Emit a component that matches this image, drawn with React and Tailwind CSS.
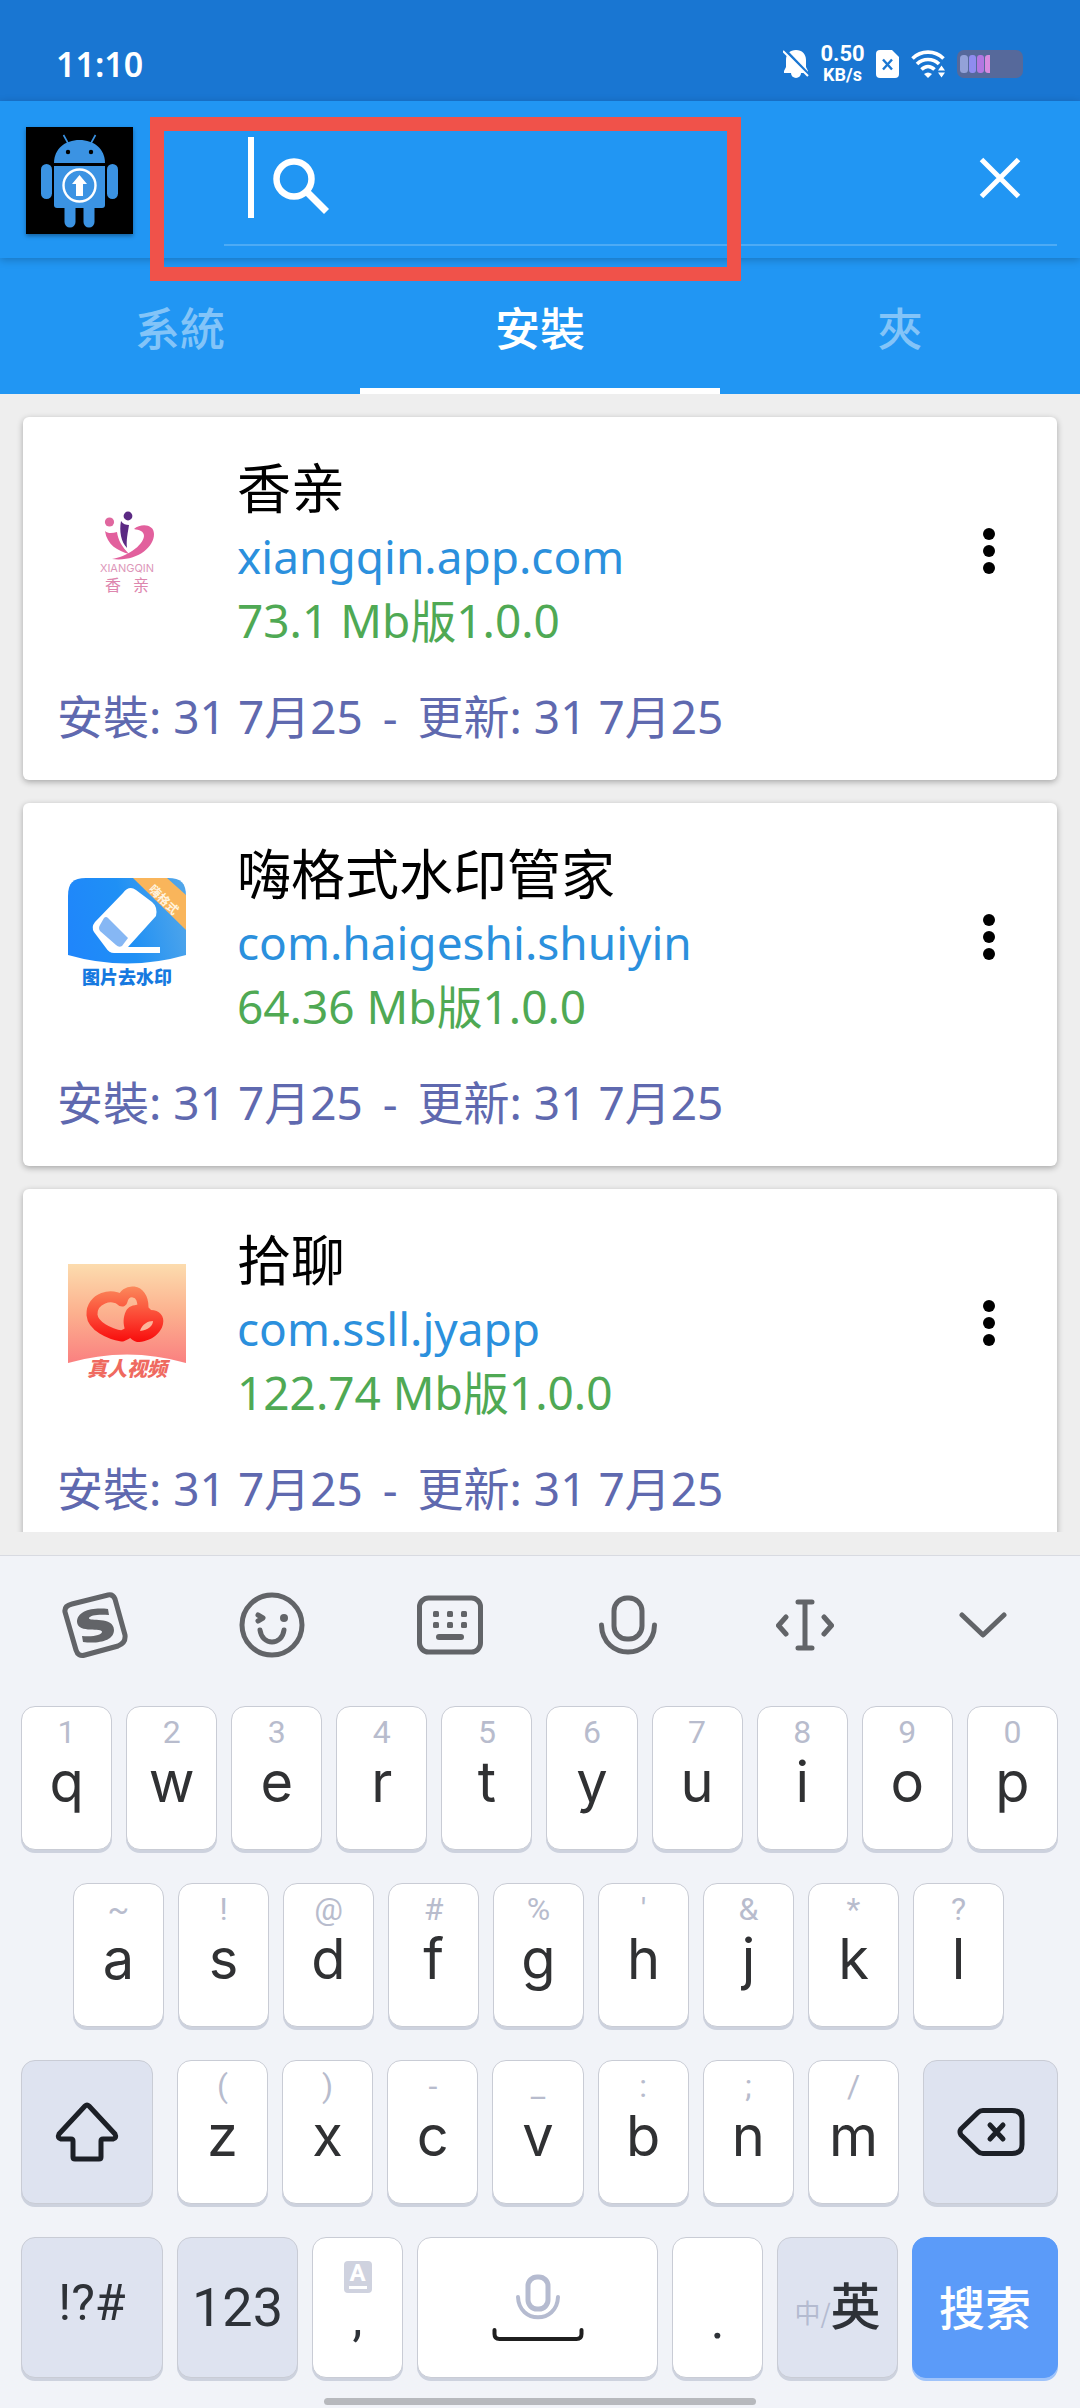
import React, { useState } from 'react';

const apps = [
  {
    name: '香亲',
    pkg: 'xiangqin.app.com',
    info: '73.1 Mb版1.0.0',
    installed: '31 7月25',
    updated: '31 7月25',
    Icon: XiangqinIcon,
  },
  {
    name: '嗨格式水印管家',
    pkg: 'com.haigeshi.shuiyin',
    info: '64.36 Mb版1.0.0',
    installed: '31 7月25',
    updated: '31 7月25',
    Icon: WatermarkIcon,
  },
  {
    name: '拾聊',
    pkg: 'com.ssll.jyapp',
    info: '122.74 Mb版1.0.0',
    installed: '31 7月25',
    updated: '31 7月25',
    Icon: ShiliaoIcon,
  },
];

const tabs = ['系統', '安裝', '夾'];

const row1 = [['q', '1'], ['w', '2'], ['e', '3'], ['r', '4'], ['t', '5'], ['y', '6'], ['u', '7'], ['i', '8'], ['o', '9'], ['p', '0']];
const row2 = [['a', '~'], ['s', '!'], ['d', '@'], ['f', '#'], ['g', '%'], ['h', "'"], ['j', '&'], ['k', '*'], ['l', '?']];
const row3 = [['z', '('], ['x', ')'], ['c', '-'], ['v', '_'], ['b', ':'], ['n', ';'], ['m', '/']];

/* App icons */

function AndroidLogo() {
  return (
    <svg viewBox="0 0 107 107" className="w-[107px] h-[107px] shrink-0 bg-black shadow-[0_2px_4px_rgba(0,0,0,0.35)]" aria-hidden="true">
      <g fill="#3b93e3">
        <path d="M28 36C28 22 39 13 53.500 13S79 22 79 36z" />
        <path d="M28 39h51v39a3 3 0 0 1-3 3H31a3 3 0 0 1-3-3z" />
        <rect x="15" y="37" width="11" height="35" rx="5.500" />
        <rect x="81" y="37" width="11" height="35" rx="5.500" />
        <path d="M38.500 80h11v15a5.500 5.500 0 0 1-11 0z" />
        <path d="M57.500 80h11v15a5.500 5.500 0 0 1-11 0z" />
      </g>
      <path d="M37.500 8l5 9M69.500 8l-5 9" stroke="#3b93e3" strokeWidth="1.600" />
      <circle cx="42" cy="25" r="2.200" />
      <circle cx="65" cy="25" r="2.200" />
      <circle cx="53.500" cy="58.500" r="16" fill="none" stroke="#fff" strokeWidth="2.400" />
      <path d="M53.500 48l7.500 9h-4v12h-7V57h-4z" fill="#fff" />
    </svg>
  );
}

function XiangqinIcon() {
  return (
    <svg viewBox="0 0 118 118" className="w-[118px] h-[118px] shrink-0" aria-hidden="true">
      <circle cx="41.500" cy="30" r="4.600" fill="#e0679f" />
      <circle cx="60" cy="24" r="4.400" fill="#5b2a83" />
      <path d="M53 29c2 3 5 4 8 4-1 7-3 15-2 23-6-6-8-17-6-27z" fill="#5b2a83" />
      <path d="M37 39c3 3 8 2 12 1 1 8 5 15 12 22-11-3-22-9-24-23z" fill="#e2609d" />
      <path d="M66 37c7-6 20-5 20 5 0 14-18 28-42 25 14-2 31-13 32-23 0-5-5-6-10-7z" fill="#e2609d" />
      <text x="59" y="80" textAnchor="middle" fontSize="11" fill="#dd97ba" className="font-[Inter,sans-serif]">XIANGQIN</text>
      <text x="37" y="99" fontSize="16" fill="#dd86ae" className="font-['Noto_Sans_CJK_SC',sans-serif]">香</text>
      <text x="65" y="99" fontSize="16" fill="#dd86ae" className="font-['Noto_Sans_CJK_SC',sans-serif]">亲</text>
    </svg>
  );
}

function WatermarkIcon() {
  return (
    <svg viewBox="0 0 118 118" className="w-[118px] h-[118px] shrink-0" aria-hidden="true">
      <defs>
        <linearGradient id="wm-bg" x1="0" y1="0.600" x2="1" y2="0.400">
          <stop offset="0" stopColor="#1f86fb" />
          <stop offset="0.500" stopColor="#1f90f5" />
          <stop offset="1" stopColor="#4fa5ea" />
        </linearGradient>
        <clipPath id="wm-clip">
          <path d="M0 18C0 5 5 0 18 0h82c13 0 18 5 18 18v59Q59 94 0 77z" />
        </clipPath>
      </defs>
      <g clipPath="url(#wm-clip)">
        <rect width="118" height="94" fill="url(#wm-bg)" />
        <path d="M65 0h34l19 17v35z" fill="#f9b55b" />
      </g>
      <text transform="translate(80 12) rotate(45)" fontSize="12" fontWeight="700" fill="#fff3df" className="font-['Noto_Sans_CJK_SC',sans-serif]">嗨格式</text>
      <path d="M55 15q6-8 13-3l16 12q6 5 4 14L60 69h32v6H46q-5 0-8-5L26 54q-3-5 1-10z" fill="#fff" />
      <path d="M36 40q2-2 4 0l20 20-6 8q-3 2-6-1L32 53q-2-3 0-6z" fill="#86b7f4" />
      <text x="59" y="106" textAnchor="middle" fontSize="18" fontWeight="900" fill="#1679e0" className="font-['Noto_Sans_CJK_SC',sans-serif]">图片去水印</text>
    </svg>
  );
}

function ShiliaoIcon() {
  return (
    <svg viewBox="0 0 118 118" className="w-[118px] h-[118px] shrink-0" aria-hidden="true">
      <defs>
        <linearGradient id="sl-bg" x1="0" y1="0" x2="0" y2="1">
          <stop offset="0" stopColor="#fcdcae" />
          <stop offset="0.500" stopColor="#fcb08e" />
          <stop offset="1" stopColor="#fa8080" />
        </linearGradient>
        <linearGradient id="sl-heart" gradientUnits="userSpaceOnUse" x1="0" y1="22" x2="0" y2="78">
          <stop offset="0" stopColor="#fb8a5c" />
          <stop offset="0.600" stopColor="#fb4030" />
          <stop offset="1" stopColor="#f80c0c" />
        </linearGradient>
      </defs>
      <path d="M0 0h118v99Q59 82 0 99z" fill="url(#sl-bg)" />
      <path
        d="M54 37C45 28 23 34 24 51c1 11 17 19 30 21 11-4 21-17 21-29 0-19-18-19-21-6z"
        fill="none"
        stroke="url(#sl-heart)"
        strokeWidth="11"
        strokeLinejoin="round"
      />
      <path d="M58 47c4-8 20-8 25-1 8 0 14 6 12 14-2 10-13 18-26 18-11-3-17-19-11-31z" fill="url(#sl-heart)" />
      <path d="M72 67c2-7 8-10 13-10 0 5-5 9-13 10z" fill="#fcb49a" />
      <text x="19" y="112" fontSize="20" fontWeight="900" fontStyle="italic" fill="#ef6a60" className="font-['Noto_Sans_CJK_SC',sans-serif]">真人视频</text>
    </svg>
  );
}

/* Status bar */

function StatusBar() {
  return (
    <div className="h-[101px] shrink-0 bg-[#1976d2] pt-[27px] pl-[56px] pr-[57px] flex items-center justify-between text-white">
      <span className="font-['Noto_Sans',sans-serif] font-semibold text-[34px] leading-[40px]">11:10</span>
      <div className="flex items-center gap-3">
        <svg viewBox="0 0 26 28" className="w-[26px] h-[28px]" aria-hidden="true">
          <path d="M13 0c6 0 10 4 10 10v7l2 4v2H1v-2l2-4v-7C3 4 7 0 13 0z" fill="#fff" />
          <path d="M8 23h10a5 5 0 0 1-10 0z" fill="#fff" />
          <path d="M2 0l25 26" stroke="#1976d2" strokeWidth="3" />
          <path d="M0 1l25 25" stroke="#fff" strokeWidth="2" />
        </svg>
        <div className="w-[43px] flex flex-col items-center font-[Roboto,sans-serif] font-bold">
          <span className="text-[22px] leading-[22px]">0.50</span>
          <span className="text-[18px] leading-[20px]">KB/s</span>
        </div>
        <svg viewBox="0 0 23 28" className="w-[23px] h-[28px]" aria-hidden="true">
          <path d="M4 0h12l7 7v17a4 4 0 0 1-4 4H4a4 4 0 0 1-4-4V4a4 4 0 0 1 4-4z" fill="#fff" />
          <path d="M7 9.500l9 10M16 9.500l-9 10" stroke="#1976d2" strokeWidth="2.400" />
        </svg>
        <svg viewBox="0 0 34 28" className="w-[34px] h-[28px]" fill="none" stroke="#fff" aria-hidden="true">
          <path d="M1.500 8.500C10 0 24 0 32.500 8.500" strokeWidth="3.600" />
          <path d="M6 14c6-6 16-6 22 0" strokeWidth="3.600" />
          <path d="M10.500 19.500c4-4 9-4 13 0" strokeWidth="3.600" />
          <path d="M13 24q4-3 8 0l-4 4z" fill="#fff" stroke="none" />
          <path d="M27 20.500l3.500-5 3.500 5zM27 22.500l3.500 5 3.500-5z" fill="#fff" stroke="none" />
        </svg>
        <svg viewBox="0 0 66 28" className="w-[66px] h-[28px]" aria-hidden="true">
          <rect width="66" height="28" rx="7" fill="#56699b" />
          <rect x="3" y="5" width="8" height="18" rx="3.500" fill="#93a2d8" />
          <rect x="12" y="5" width="7" height="18" rx="3" fill="#8f8cf0" />
          <rect x="20" y="5" width="7" height="18" rx="3" fill="#b277e2" />
          <path d="M33 5v18h-2a3 3 0 0 1-3-3V8a3 3 0 0 1 3-3z" fill="#d98be0" />
        </svg>
      </div>
    </div>
  );
}

function Header() {
  const [query, setQuery] = useState('');

  return (
    <header className="relative z-10 h-[157px] shrink-0 bg-[#2196f3] flex items-start pl-[26px] pr-[23px] shadow-[0_2px_8px_rgba(0,0,0,0.22)]">
      <div className="pt-[26px]">
        <AndroidLogo />
      </div>
      <form className="ml-[91px] flex-1 min-w-0 h-[145px] pt-[10px] pl-6 pr-[36px] flex items-center border-b-2 border-[#4dabf5]" onSubmit={(e) => e.preventDefault()}>
        <span className="w-[6px] h-[81px] shrink-0 bg-white" />
        <label htmlFor="search" className="ml-[19px] mt-4 shrink-0">
          <svg viewBox="0 0 56 56" className="w-[56px] h-[56px]" fill="none" stroke="#fff" aria-hidden="true">
            <circle cx="21" cy="21" r="17.500" strokeWidth="6.500" />
            <path d="M34 34l19.500 19.500" strokeWidth="7" />
          </svg>
        </label>
        <input
          id="search"
          aria-label="搜索"
          value={query}
          onChange={(e) => setQuery(e.target.value)}
          className="flex-1 min-w-0 h-[81px] ml-3 bg-transparent text-white text-[46px] outline-none"
        />
        <button type="button" aria-label="清除" className="shrink-0" onClick={() => setQuery('')}>
          <svg viewBox="0 0 42 42" className="w-[42px] h-[42px]" stroke="#fff" strokeWidth="5" aria-hidden="true">
            <path d="M2.500 2.500l37 37M39.500 2.500l-37 37" />
          </svg>
        </button>
      </form>
      {/* Highlight frame around the search box */}
      <div className="absolute left-[150px] top-[16px] w-[591px] h-[164px] border-[14px] border-[#f0524a] pointer-events-none" />
    </header>
  );
}

function Tabs() {
  const [active, setActive] = useState('安裝');

  return (
    <nav className="h-[136px] shrink-0 bg-[#2196f3] grid grid-cols-3 font-['Noto_Sans_CJK_TC',sans-serif] font-medium text-[45px]">
      {tabs.map((tab) => (
        <button
          key={tab}
          onClick={() => setActive(tab)}
          className={`pt-2 border-b-[6px] ${
            tab === active ? 'text-white border-white' : 'text-[#83c4f8] border-transparent'
          }`}
        >
          {tab}
        </button>
      ))}
    </nav>
  );
}

function AppCard({ app }) {
  const { Icon } = app;

  return (
    <article className="shrink-0 bg-white rounded-md py-8 shadow-[0_2px_6px_rgba(0,0,0,0.3)] font-['Noto_Sans','Noto_Sans_CJK_TC',sans-serif] text-[46px] leading-[64px]">
      <div className="flex items-center pl-[45px] pr-[44px]">
        <Icon />
        <div className="ml-[51px] flex-1 min-w-0">
          <h2 className="pt-1 font-['Noto_Sans','Noto_Sans_CJK_SC',sans-serif] text-[54px] leading-[71px] text-black">{app.name}</h2>
          <p className="text-[#2b90dd]">{app.pkg}</p>
          <p className="text-[#4fa954]">{app.info}</p>
        </div>
        <button aria-label="更多" className="w-12 h-[64px] flex items-center justify-center">
          <svg viewBox="0 0 12 46" className="w-[12px] h-[46px]" aria-hidden="true">
            <circle cx="6" cy="6" r="6" />
            <circle cx="6" cy="23" r="6" />
            <circle cx="6" cy="40" r="6" />
          </svg>
        </button>
      </div>
      <p className="mt-8 pl-[34px] text-[#5f69af]">
        安裝: {app.installed} <span className="mx-2">-</span> 更新: {app.updated}
      </p>
    </article>
  );
}

/* Keyboard */

function Key({ className = '', children, ...props }) {
  return (
    <button
      className={`basis-0 min-w-0 rounded-[14px] border border-[#c9ccd5] shadow-[0_3px_0_#cdd2de] flex items-center justify-center ${className}`}
      {...props}
    >
      {children}
    </button>
  );
}

function LetterKey({ letter, hint }) {
  return (
    <Key className="grow-[91] flex-col !justify-start pt-[6px] bg-white">
      <span className="font-[Roboto,sans-serif] text-[32px] leading-[38px] text-[#b8bccd]">{hint}</span>
      <span className="font-[Inter,sans-serif] text-[56px] leading-[62px] text-[#303133]">{letter}</span>
    </Key>
  );
}

function ToolIcons() {
  return (
    <div className="h-[138px] pl-[6px] pr-[8px] grid grid-cols-6 items-center justify-items-center">
      <button aria-label="搜狗">
        <svg viewBox="0 0 66 66" className="w-[66px] h-[66px]" aria-hidden="true">
          <path d="M10 12L46 3q5-1 7 4l10 36q1 8-7 11L23 63q-7 2-9-5L3 20q-1-6 7-8z" fill="none" stroke="#626468" strokeWidth="5" />
          <path d="M46 17l1 6c-10-1-19 0-20 3-1 4 25-2 25 12 0 11-16 14-31 12l-1-6c12 1 19-1 20-4 1-5-24 2-25-10C15 19 30 15 46 17z" fill="#626468" />
        </svg>
      </button>
      <button aria-label="表情">
        <svg viewBox="0 0 66 66" className="w-[66px] h-[66px]" fill="none" stroke="#626468" strokeWidth="5" strokeLinecap="round" aria-hidden="true">
          <circle cx="33" cy="33" r="30" />
          <path d="M21 38c2 16 22 16 24 0" />
          <path d="M19 23l5 3-5 3" strokeLinejoin="round" />
          <circle cx="45" cy="26" r="4" fill="#626468" stroke="none" />
        </svg>
      </button>
      <button aria-label="键盘">
        <svg viewBox="0 0 66 60" className="w-[66px] h-[60px]" aria-hidden="true">
          <rect x="2.500" y="3" width="61" height="54" rx="9" fill="none" stroke="#626468" strokeWidth="5" />
          <g fill="#626468">
            <rect x="16" y="16" width="6" height="6" rx="1.500" />
            <rect x="30" y="16" width="6" height="6" rx="1.500" />
            <rect x="44" y="16" width="6" height="6" rx="1.500" />
            <rect x="16" y="27" width="6" height="6" rx="1.500" />
            <rect x="30" y="27" width="6" height="6" rx="1.500" />
            <rect x="44" y="27" width="6" height="6" rx="1.500" />
            <rect x="19" y="39" width="28" height="6" rx="3" />
          </g>
        </svg>
      </button>
      <button aria-label="语音">
        <svg viewBox="0 0 58 60" className="w-[58px] h-[60px]" fill="none" stroke="#626468" strokeWidth="5" strokeLinecap="round" aria-hidden="true">
          <rect x="15" y="3" width="28" height="41" rx="13" />
          <path d="M2.500 30c1 36 52 36 53 0" />
        </svg>
      </button>
      <button aria-label="光标">
        <svg viewBox="0 0 58 52" className="w-[58px] h-[52px]" fill="none" stroke="#626468" strokeWidth="5" strokeLinecap="round" strokeLinejoin="round" aria-hidden="true">
          <path d="M22 3h14M29 3v46M22 49h14" />
          <path d="M10 18l-7.500 8.500L10 35M48 18l7.500 8.500L48 35" />
        </svg>
      </button>
      <button aria-label="收起">
        <svg viewBox="0 0 48 26" className="w-[48px] h-[26px]" fill="none" stroke="#626468" strokeWidth="5" strokeLinecap="round" strokeLinejoin="round" aria-hidden="true">
          <path d="M3 3l21 20L45 3" />
        </svg>
      </button>
    </div>
  );
}

function Keyboard() {
  return (
    <section className="shrink-0 bg-[#f1f3f8] border-t border-[#d8dae1] pb-[3px]">
      <ToolIcons />
      <div className="pt-3 pl-[21px] pr-[22px] flex flex-col gap-[33px]">
        <div className="h-[144px] flex gap-[14px]">
          {row1.map(([letter, hint]) => (
            <LetterKey key={letter} letter={letter} hint={hint} />
          ))}
        </div>
        <div className="h-[144px] pl-[52px] pr-[54px] flex gap-[14px]">
          {row2.map(([letter, hint]) => (
            <LetterKey key={letter} letter={letter} hint={hint} />
          ))}
        </div>
        <div className="h-[144px] flex gap-6">
          <Key className="grow-[130] bg-[#dee3f0]" aria-label="Shift">
            <svg viewBox="0 0 64 60" className="w-[64px] h-[60px]" fill="none" stroke="#1c2027" strokeWidth="5" strokeLinejoin="round" aria-hidden="true">
              <path d="M30 4q2-2 4 0l26 28q2 4-2 5H48q-2 0-2 2v16q0 2-2 2H20q-2 0-2-2V39q0-2-2-2H6q-4-1-2-5z" />
            </svg>
          </Key>
          <div className="grow-[723] basis-0 flex gap-[14px]">
            {row3.map(([letter, hint]) => (
              <LetterKey key={letter} letter={letter} hint={hint} />
            ))}
          </div>
          <Key className="grow-[133] bg-[#dee3f0]" aria-label="Backspace">
            <svg viewBox="0 0 68 48" className="w-[68px] h-[48px]" fill="none" stroke="#1c2027" strokeWidth="5" strokeLinejoin="round" strokeLinecap="round" aria-hidden="true">
              <path d="M26 2.500h29q10 0 10 9v25q0 9-10 9H26q-3 0-5-2L4 27q-2-3 0-6L21 4.500q2-2 5-2z" />
              <path d="M33 17l13 14M46 17L33 31" />
            </svg>
          </Key>
        </div>
        <div className="h-[141px] flex gap-[14px] text-[#2e3238]">
          <Key className="grow-[140] pb-2 bg-[#dee3f0] font-[Roboto,sans-serif] text-[50px]">!?#</Key>
          <Key className="grow-[119] bg-[#dee3f0] font-[Roboto,sans-serif] text-[54px]">123</Key>
          <Key className="grow-[89] flex-col !justify-start pt-[23px] bg-white">
            <span className="w-[28px] h-[32px] rounded-sm bg-[#cfd2df] flex flex-col items-center text-white font-[Roboto,sans-serif] font-bold text-[24px] leading-[25px]">
              A
              <span className="w-[18px] h-[3px] bg-white" />
            </span>
            <span className="font-[Roboto,sans-serif] text-[50px] leading-[50px]">,</span>
          </Key>
          <Key className="grow-[239] flex-col bg-white" aria-label="空格">
            <svg viewBox="0 0 92 68" className="w-[92px] h-[68px]" fill="none" strokeWidth="4" strokeLinecap="round" aria-hidden="true">
              <rect x="36" y="3" width="20" height="32" rx="9" stroke="#b5bbd0" strokeWidth="5" />
              <path d="M26 23c1 27 39 27 40 0" stroke="#b5bbd0" />
              <path d="M2.500 56v4q0 5 5 5h77q5 0 5-5v-4" stroke="#1f1f1f" />
            </svg>
          </Key>
          <Key className="grow-[89] bg-white font-[Roboto,sans-serif] text-[54px] pt-[24px]">.</Key>
          <Key className="grow-[119] pb-2 bg-[#dee3f0] font-['Noto_Sans_CJK_SC',sans-serif]">
            <span className="pt-4 text-[26px] text-[#b4bbd0]">中/</span>
            <span className="text-[50px] font-medium">英</span>
          </Key>
          <Key className="grow-[144] pb-1 bg-[#5b9bf9] !border-[#5b9bf9] !shadow-[0_3px_0_#9fc3fa] font-['Noto_Sans_CJK_SC',sans-serif] font-medium text-[46px] text-white">
            搜索
          </Key>
        </div>
      </div>
      <div className="mt-5 mx-auto w-2/5 h-[7px] rounded-full bg-[#b7b9bd]" />
    </section>
  );
}

const App = () => {
  return (
    <div className="h-screen flex flex-col bg-[#eeeeee] overflow-hidden">
      <StatusBar />
      <Header />
      <Tabs />
      <main className="flex-1 min-h-0 mb-[23px] p-[23px] flex flex-col gap-[23px] overflow-hidden">
        {apps.map((app) => (
          <AppCard key={app.pkg} app={app} />
        ))}
      </main>
      <Keyboard />
    </div>
  );
};

export default App;
